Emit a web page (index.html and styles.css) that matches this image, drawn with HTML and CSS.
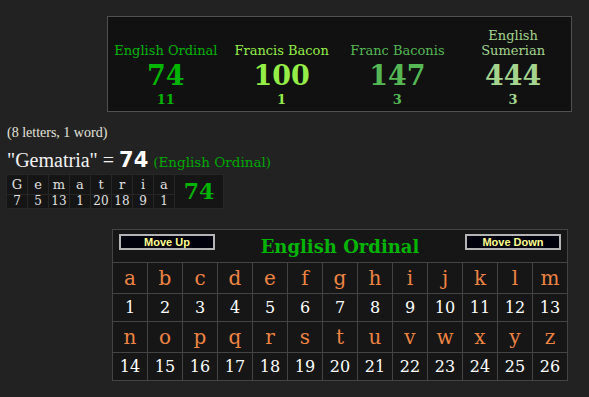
FILE: index.html
```html
<!DOCTYPE html>
<html lang="en">
<head>
    <meta charset="UTF-8">
    <title>Gematria</title>
    <link rel="stylesheet" href="styles.css">
</head>
<body>
    <div class="score-box">
        <div class="score eo">
            <div class="score-name">English Ordinal</div>
            <div class="score-value">74</div>
            <div class="score-count">11</div>
        </div>
        <div class="score fb">
            <div class="score-name">Francis Bacon</div>
            <div class="score-value">100</div>
            <div class="score-count">1</div>
        </div>
        <div class="score fbs">
            <div class="score-name">Franc Baconis</div>
            <div class="score-value">147</div>
            <div class="score-count">3</div>
        </div>
        <div class="score es">
            <div class="score-name">English<br>Sumerian</div>
            <div class="score-value">444</div>
            <div class="score-count">3</div>
        </div>
    </div>

    <div class="word-count">(8 letters, 1 word)</div>
    <div class="phrase">"Gematria" = <span class="phrase-total">74</span> <span class="phrase-cipher">(English Ordinal)</span></div>

    <table class="breakdown">
        <tr class="letters">
            <td>G</td><td>e</td><td>m</td><td>a</td><td>t</td><td>r</td><td>i</td><td>a</td>
            <td class="breakdown-total" rowspan="2">74</td>
        </tr>
        <tr class="values">
            <td>7</td><td>5</td><td>13</td><td>1</td><td>20</td><td>18</td><td>9</td><td>1</td>
        </tr>
    </table>

    <table class="cipher" id="cipher">
        <tr>
            <td class="cipher-head" colspan="13">
                <div class="cipher-bar">
                    <button class="move-btn">Move Up</button>
                    <span class="cipher-title">English Ordinal</span>
                    <button class="move-btn">Move Down</button>
                </div>
            </td>
        </tr>
    </table>

    <script>
        const table = document.getElementById('cipher');
        const alphabet = 'abcdefghijklmnopqrstuvwxyz';

        for (let half = 0; half < 2; half++) {
            const letterRow = document.createElement('tr');
            const numberRow = document.createElement('tr');
            letterRow.classList.add('cipher-letters');
            numberRow.classList.add('cipher-numbers');
            for (let i = 0; i < 13; i++) {
                const n = half * 13 + i;
                const l = document.createElement('td');
                l.textContent = alphabet[n];
                letterRow.appendChild(l);
                const v = document.createElement('td');
                v.textContent = n + 1;
                numberRow.appendChild(v);
            }
            table.appendChild(letterRow);
            table.appendChild(numberRow);
        }
    </script>
</body>
</html>
```

FILE: styles.css
```css
body {
    margin: 0;
    padding: 16px 0 0 0;
    background-color: #222222;
    font-family: "DejaVu Serif", serif;
    color: #dddddd;
}
.score-box {
    box-sizing: border-box;
    margin-left: 107px;
    width: 465px;
    height: 96px;
    border: 1px solid #505050;
    background-color: #111111;
    display: grid;
    grid-template-columns: repeat(4, 1fr);
    align-items: end;
    padding-bottom: 3px;
}
.score {
    text-align: center;
}
.score-name {
    font-size: 13px;
    line-height: 15px;
    margin-bottom: 3px;
}
.score-value {
    font-size: 27px;
    font-weight: bold;
    line-height: 30px;
}
.score-count {
    font-size: 13px;
    font-weight: bold;
    line-height: 17px;
}
.eo {
    color: #00b400;
}
.fb {
    color: #95ee48;
}
.fbs {
    color: #55b855;
}
.es {
    color: #a4d48e;
}
.word-count {
    font-family: "Liberation Serif", serif;
    font-size: 14px;
    line-height: 16px;
    margin: 13px 0 0 7px;
    color: #e4e4dc;
}
.phrase {
    font-family: "Liberation Serif", serif;
    font-size: 20px;
    line-height: 24px;
    margin: 7px 0 0 7px;
    color: #f2f2f2;
}
.phrase-total {
    font-family: "DejaVu Sans", sans-serif;
    font-weight: bold;
    font-size: 21px;
    color: #ffffff;
}
.phrase-cipher {
    font-family: "DejaVu Serif", serif;
    font-size: 13.5px;
    color: #00a800;
}
.breakdown {
    margin: 0 0 0 6px;
    border-spacing: 1px;
    background-color: #262626;
}
.breakdown td {
    background-color: #151515;
    text-align: center;
    width: 20px;
    padding: 0;
    color: #e0e0e0;
}
.breakdown .letters td {
    font-size: 13px;
    line-height: 19px;
}
.breakdown .values td {
    font-size: 12px;
    line-height: 13px;
}
.breakdown td.breakdown-total {
    width: 48px;
    font-size: 22px;
    font-weight: bold;
    color: #00b400;
}
.cipher {
    margin: 20px 0 0 112px;
    width: 456px;
    table-layout: fixed;
    border-collapse: collapse;
    background-color: #161616;
}
.cipher td {
    border: 1px solid #444444;
    padding: 0;
    text-align: center;
}
.cipher-bar {
    height: 32px;
    display: flex;
    justify-content: space-between;
    align-items: flex-start;
    padding: 4px 6px 0 6px;
    box-sizing: border-box;
}
.move-btn {
    width: 96px;
    height: 16px;
    padding: 0;
    background-color: #00000c;
    border: 2px solid #b4b4b4;
    color: #ffff90;
    font-family: "Liberation Sans", sans-serif;
    font-weight: bold;
    font-size: 11px;
    line-height: 12px;
}
.cipher-title {
    font-size: 18px;
    font-weight: bold;
    line-height: 24px;
    margin-top: 1px;
    color: #00b400;
}
.cipher-letters td {
    font-size: 20px;
    line-height: 30px;
    color: #ee8444;
}
.cipher-numbers td {
    font-size: 16px;
    line-height: 27px;
    color: #ffffff;
}
```
